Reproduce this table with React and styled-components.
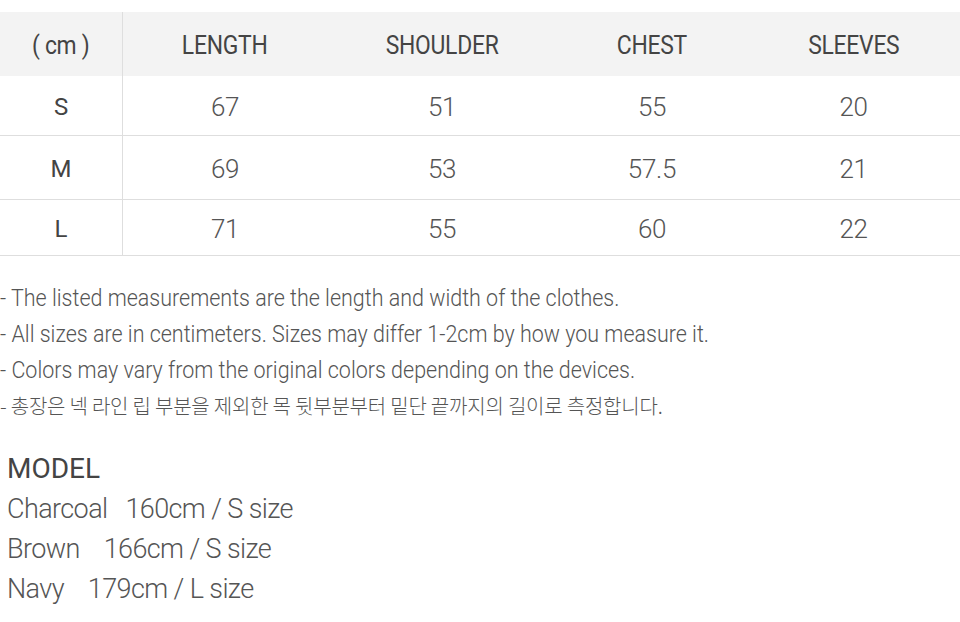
import React from 'react';
import styled, { createGlobalStyle } from 'styled-components';

const GlobalStyle = createGlobalStyle`
  html, body {
    margin: 0;
    padding: 0;
    background: #ffffff;
    font-family: Roboto, "Noto Sans CJK KR", sans-serif;
  }
`;

const columns = ['( cm )', 'LENGTH', 'SHOULDER', 'CHEST', 'SLEEVES'];

const rows = [
  { size: 'S', values: ['67', '51', '55', '20'], height: 60 },
  { size: 'M', values: ['69', '53', '57.5', '21'], height: 64 },
  { size: 'L', values: ['71', '55', '60', '22'], height: 56 },
];

const notes = [
  '- The listed measurements are the length and width of the clothes.',
  '- All sizes are in centimeters. Sizes may differ 1-2cm by how you measure it.',
  '- Colors may vary from the original colors depending on the devices.',
];

const models = [
  'Charcoal   160cm / S size',
  'Brown    166cm / S size',
  'Navy    179cm / L size',
];

const App = () => {
  return (
    <Page>
      <GlobalStyle />
      <Table>
        <HeadRow>
          {columns.map((c, i) => (
            <HeadCell key={c} first={i === 0}>
              <HeadLabel>{c}</HeadLabel>
            </HeadCell>
          ))}
        </HeadRow>
        {rows.map((r) => (
          <BodyRow key={r.size} h={r.height}>
            <SizeCell>{r.size}</SizeCell>
            {r.values.map((v, i) => (
              <ValueCell key={i}>{v}</ValueCell>
            ))}
          </BodyRow>
        ))}
      </Table>

      <Notes>
        {notes.map((n) => (
          <Note key={n}>{n}</Note>
        ))}
        <KoreanNote>- 총장은 넥 라인 립 부분을 제외한 목 뒷부분부터 밑단 끝까지의 길이로 측정합니다.</KoreanNote>
      </Notes>

      <Model>
        <ModelTitle>MODEL</ModelTitle>
        {models.map((m) => (
          <ModelLine key={m}>{m}</ModelLine>
        ))}
      </Model>
    </Page>
  );
};

// layout

const Page = styled.div`
  width: 960px;
  height: 622px;
  overflow: hidden;
  padding-top: 12px;
  box-sizing: border-box;
`;

const Table = styled.div`
  display: flex;
  flex-direction: column;
`;

const Grid = styled.div`
  display: grid;
  grid-template-columns: 123px 204px 230px 190px 213px;
`;

const HeadRow = styled(Grid)`
  height: 64px;
  background: #f3f3f3;
`;

const BodyRow = styled(Grid)`
  height: ${(p) => p.h}px;
  border-bottom: 1px solid #dedede;
  box-sizing: border-box;
`;

const Cell = styled.div`
  display: flex;
  align-items: center;
  justify-content: center;
  padding-top: 2px;
`;

const HeadCell = styled(Cell)`
  border-right: ${(p) => (p.first ? '1px solid #dedede' : 'none')};
`;

const HeadLabel = styled.span`
  display: inline-block;
  font-size: 26px;
  font-weight: 400;
  color: #444;
  letter-spacing: -0.3px;
  white-space: nowrap;
  transform: scaleX(0.88);
`;

const SizeCell = styled(Cell)`
  font-size: 24px;
  font-weight: 400;
  color: #444;
  border-right: 1px solid #dedede;
`;

const ValueCell = styled(Cell)`
  font-size: 26px;
  font-weight: 300;
  color: #555;
  letter-spacing: -0.3px;
`;

const Notes = styled.div`
  padding-top: 24px;
  display: flex;
  flex-direction: column;
`;

const Note = styled.div`
  font-size: 24px;
  font-weight: 300;
  color: #555;
  line-height: 36px;
  white-space: nowrap;
  transform: scaleX(0.895);
  transform-origin: left center;
`;

const KoreanNote = styled(Note)`
  font-family: "Noto Sans CJK KR", sans-serif;
  font-size: 20px;
  font-weight: 300;
  letter-spacing: -0.2px;
  transform: none;
`;

const Model = styled.div`
  padding: 25px 0 0 7px;
  display: flex;
  flex-direction: column;
`;

const ModelTitle = styled.div`
  font-size: 28px;
  font-weight: 400;
  color: #444;
  line-height: 40px;
`;

const ModelLine = styled.div`
  font-size: 27px;
  font-weight: 300;
  color: #555;
  line-height: 40px;
  white-space: pre;
  letter-spacing: -0.6px;
`;

export default App;
